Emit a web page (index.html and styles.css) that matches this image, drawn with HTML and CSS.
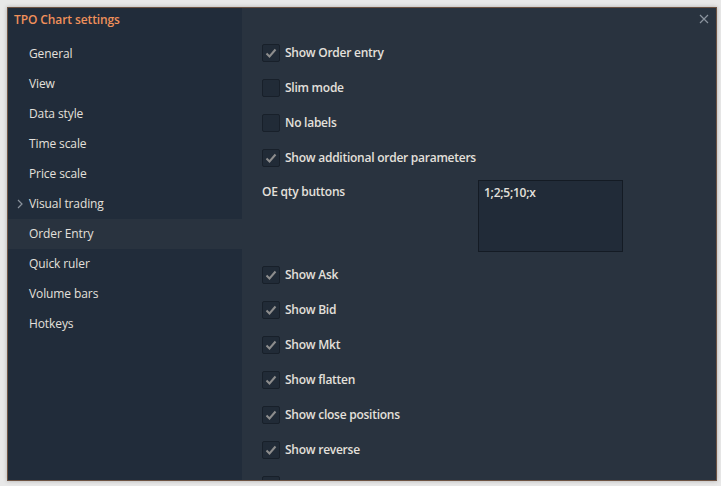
FILE: index.html
```html
<!DOCTYPE html>
<html>
<head>
<meta charset="utf-8">
<link rel="stylesheet" href="styles.css">
</head>
<body>
<div class="window">
  <aside class="sidebar">
    <div class="title">TPO Chart settings</div>
    <ul class="nav">
      <li class="nav-item">General</li>
      <li class="nav-item">View</li>
      <li class="nav-item">Data style</li>
      <li class="nav-item">Time scale</li>
      <li class="nav-item">Price scale</li>
      <li class="nav-item has-children"><svg class="chev" width="6" height="10" viewBox="0 0 6 10"><polyline points="1,1 5,5 1,9" fill="none" stroke="#8a929c" stroke-width="1.2"/></svg>Visual trading</li>
      <li class="nav-item active">Order Entry</li>
      <li class="nav-item">Quick ruler</li>
      <li class="nav-item">Volume bars</li>
      <li class="nav-item">Hotkeys</li>
    </ul>
  </aside>
  <main class="content">
    <svg class="close" width="10" height="10" viewBox="0 0 10 10"><path d="M1 1L9 9M9 1L1 9" stroke="#8a939d" stroke-width="1.2"/></svg>
    <div class="row"><span class="cb checked"><svg width="12" height="10" viewBox="0 0 12 10"><polyline points="1.5,5.5 4.5,8.5 10.5,1.5" fill="none" stroke="#8d8d8d" stroke-width="2"/></svg></span><span class="label">Show Order entry</span></div>
    <div class="row"><span class="cb"></span><span class="label">Slim mode</span></div>
    <div class="row"><span class="cb"></span><span class="label">No labels</span></div>
    <div class="row"><span class="cb checked"><svg width="12" height="10" viewBox="0 0 12 10"><polyline points="1.5,5.5 4.5,8.5 10.5,1.5" fill="none" stroke="#8d8d8d" stroke-width="2"/></svg></span><span class="label">Show additional order parameters</span></div>
    <div class="field">
      <span class="field-label">OE qty buttons</span>
      <div class="textarea">1;2;5;10;x</div>
    </div>
    <div class="row"><span class="cb checked"><svg width="12" height="10" viewBox="0 0 12 10"><polyline points="1.5,5.5 4.5,8.5 10.5,1.5" fill="none" stroke="#8d8d8d" stroke-width="2"/></svg></span><span class="label">Show Ask</span></div>
    <div class="row"><span class="cb checked"><svg width="12" height="10" viewBox="0 0 12 10"><polyline points="1.5,5.5 4.5,8.5 10.5,1.5" fill="none" stroke="#8d8d8d" stroke-width="2"/></svg></span><span class="label">Show Bid</span></div>
    <div class="row"><span class="cb checked"><svg width="12" height="10" viewBox="0 0 12 10"><polyline points="1.5,5.5 4.5,8.5 10.5,1.5" fill="none" stroke="#8d8d8d" stroke-width="2"/></svg></span><span class="label">Show Mkt</span></div>
    <div class="row"><span class="cb checked"><svg width="12" height="10" viewBox="0 0 12 10"><polyline points="1.5,5.5 4.5,8.5 10.5,1.5" fill="none" stroke="#8d8d8d" stroke-width="2"/></svg></span><span class="label">Show flatten</span></div>
    <div class="row"><span class="cb checked"><svg width="12" height="10" viewBox="0 0 12 10"><polyline points="1.5,5.5 4.5,8.5 10.5,1.5" fill="none" stroke="#8d8d8d" stroke-width="2"/></svg></span><span class="label">Show close positions</span></div>
    <div class="row"><span class="cb checked"><svg width="12" height="10" viewBox="0 0 12 10"><polyline points="1.5,5.5 4.5,8.5 10.5,1.5" fill="none" stroke="#8d8d8d" stroke-width="2"/></svg></span><span class="label">Show reverse</span></div>
    <div class="row"><span class="cb"></span></div>
  </main>
</div>
</body>
</html>
```

FILE: styles.css
```css
html, body {
  margin: 0;
  padding: 0;
}
body {
  background: #e8e8e8;
  width: 721px;
  height: 486px;
  overflow: hidden;
  font-family: "Open Sans", "Noto Sans", sans-serif;
  font-size: 12px;
  color: #e4e0dc;
}
.window {
  margin: 7px 0 0 7px;
  width: 708px;
  height: 472px;
  border: 1px solid #6d5343;
  display: grid;
  grid-template-columns: 234px 1fr;
  overflow: hidden;
  box-shadow: 0 0 4px rgba(0,0,0,0.25);
}
.sidebar {
  background: #212c3a;
  display: flex;
  flex-direction: column;
}
.title {
  color: #f0905a;
  font-weight: 600;
  padding: 4px 0 0 6px;
  height: 27px;
  line-height: 16px;
  letter-spacing: -0.1px;
}
.nav {
  list-style: none;
  margin: 0;
  padding: 0;
}
.nav-item {
  height: 30px;
  line-height: 30px;
  padding-left: 21px;
  position: relative;
  display: flex;
  align-items: center;
  letter-spacing: -0.1px;
}
.nav-item.active {
  background: #29333f;
}
.chev {
  position: absolute;
  left: 9px;
  top: 10px;
}
.content {
  background: #29333f;
  padding: 27px 0 0 20px;
  position: relative;
  font-weight: 600;
  letter-spacing: -0.25px;
}
.close {
  position: absolute;
  right: 7px;
  top: 6px;
}
.row {
  height: 35px;
  display: flex;
  align-items: center;
  gap: 5px;
}
.cb {
  width: 16px;
  height: 16px;
  background: #212b37;
  border: 1px solid #18202a;
  border-radius: 2px;
  display: flex;
  align-items: center;
  justify-content: center;
}
.field {
  display: grid;
  grid-template-columns: 216px 145px;
  margin: 5px 0 5px;
}
.field-label {
  padding-top: 4px;
  line-height: 16px;
}
.textarea {
  background: #212b38;
  border: 1px solid #141b24;
  padding: 4px 5px;
  box-sizing: border-box;
  height: 72px;
  line-height: 16px;
}
```
